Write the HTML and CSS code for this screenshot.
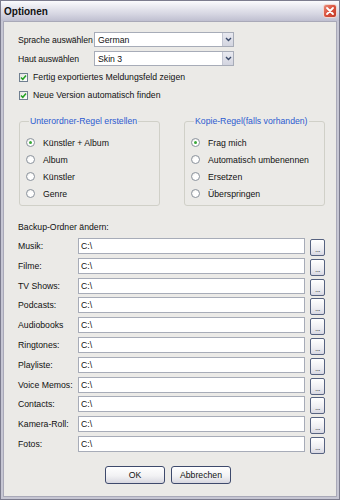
FILE: index.html
```html
<!DOCTYPE html>
<html>
<head>
<meta charset="utf-8">
<link rel="stylesheet" href="styles.css">
</head>
<body>
<div class="window">
  <div class="titlebar">
    <span class="title">Optionen</span>
    <span class="close"><svg width="14" height="14" viewBox="0 0 14 14"><path d="M4 4 L10 10 M10 4 L4 10" stroke="#fff" stroke-width="1.8" stroke-linecap="round"/></svg></span>
  </div>
  <div class="client">
    <div class="selrow">
      <span class="sellabel">Sprache auswählen</span>
      <div class="select"><span class="seltext">German</span><span class="arrow"><svg width="7" height="5" viewBox="0 0 7 5"><path d="M1 1 L3.5 3.5 L6 1" fill="none" stroke="#3a4a6a" stroke-width="1.4"/></svg></span></div>
    </div>
    <div class="selrow">
      <span class="sellabel">Haut auswählen</span>
      <div class="select"><span class="seltext">Skin 3</span><span class="arrow"><svg width="7" height="5" viewBox="0 0 7 5"><path d="M1 1 L3.5 3.5 L6 1" fill="none" stroke="#3a4a6a" stroke-width="1.4"/></svg></span></div>
    </div>
    <div class="checks">
      <label class="check"><span class="cbox"><svg width="7" height="7" viewBox="0 0 7 7"><path d="M1 3.5 L2.8 5.3 L6 1.6" fill="none" stroke="#22a122" stroke-width="1.5"/></svg></span>Fertig exportiertes Meldungsfeld zeigen</label>
      <label class="check"><span class="cbox"><svg width="7" height="7" viewBox="0 0 7 7"><path d="M1 3.5 L2.8 5.3 L6 1.6" fill="none" stroke="#22a122" stroke-width="1.5"/></svg></span>Neue Version automatisch finden</label>
    </div>
    <div class="groups">
      <fieldset class="group left">
        <legend>Unterordner-Regel erstellen</legend>
        <div class="radio"><span class="rcirc on"></span>Künstler + Album</div>
        <div class="radio"><span class="rcirc"></span>Album</div>
        <div class="radio"><span class="rcirc"></span>Künstler</div>
        <div class="radio"><span class="rcirc"></span>Genre</div>
      </fieldset>
      <fieldset class="group">
        <legend>Kopie-Regel(falls vorhanden)</legend>
        <div class="radio"><span class="rcirc on"></span>Frag mich</div>
        <div class="radio"><span class="rcirc"></span>Automatisch umbenennen</div>
        <div class="radio"><span class="rcirc"></span>Ersetzen</div>
        <div class="radio"><span class="rcirc"></span>Überspringen</div>
      </fieldset>
    </div>
    <div class="backup">Backup-Ordner ändern:</div>
    <div class="folders">
      <span class="flabel">Musik:</span><div class="finput">C:\</div><span class="browse">...</span>
      <span class="flabel">Filme:</span><div class="finput">C:\</div><span class="browse">...</span>
      <span class="flabel">TV Shows:</span><div class="finput">C:\</div><span class="browse">...</span>
      <span class="flabel">Podcasts:</span><div class="finput">C:\</div><span class="browse">...</span>
      <span class="flabel">Audiobooks</span><div class="finput">C:\</div><span class="browse">...</span>
      <span class="flabel">Ringtones:</span><div class="finput">C:\</div><span class="browse">...</span>
      <span class="flabel">Playliste:</span><div class="finput">C:\</div><span class="browse">...</span>
      <span class="flabel">Voice Memos:</span><div class="finput">C:\</div><span class="browse">...</span>
      <span class="flabel">Contacts:</span><div class="finput">C:\</div><span class="browse">...</span>
      <span class="flabel">Kamera-Roll:</span><div class="finput">C:\</div><span class="browse">...</span>
      <span class="flabel">Fotos:</span><div class="finput">C:\</div><span class="browse">...</span>
    </div>
    <div class="buttons">
      <span class="btn">OK</span>
      <span class="btn">Abbrechen</span>
    </div>
  </div>
</div>
</body>
</html>
```
FILE: styles.css
```css
* { box-sizing: border-box; }
html, body { margin: 0; padding: 0; background: #fff; }
body { font-family: "Liberation Sans", Arial, sans-serif; font-size: 8.7px; color: #111; }

.window {
  width: 340px; height: 500px;
  border: 1px solid #7c7c8e;
  background: #c6c6d3;
  display: flex; flex-direction: column;
}
.titlebar {
  height: 20px; flex: none;
  display: flex; align-items: center; justify-content: space-between;
  padding: 0 2px 0 3px;
  background: linear-gradient(to bottom, #fbfbfd 0%, #ececf2 25%, #d6d6e2 65%, #bfbfd0 100%);
}
.title { font-weight: bold; font-size: 10px; color: #111; }
.close {
  width: 14px; height: 14px;
  border: 1px solid #f2d6d0;
  border-radius: 3px;
  background: linear-gradient(135deg, #e98a78 0%, #d8503c 50%, #c23a28 100%);
  display: flex; align-items: center; justify-content: center;
}
.close svg { display: block; margin: -1px; }
.client {
  flex: 1;
  margin: 0 2px 2px 2px;
  border: 1px solid #a9a9b8;
  background: #ebeae7;
  padding: 10px 11px 0 14px;
}

.selrow { display: flex; align-items: center; height: 15px; margin-bottom: 4px; }
.sellabel { width: 76px; flex: none; white-space: nowrap; letter-spacing: -0.1px; }
.select {
  width: 140px; height: 15px; flex: none;
  background: #fff; border: 1px solid #a7acb8;
  display: flex; align-items: center; justify-content: space-between;
  padding-left: 3px;
}
.arrow {
  width: 11px; height: 13px;
  background: linear-gradient(#e8e9f0, #d3d5e0);
  border-left: 1px solid #c3c6d2;
  display: flex; align-items: center; justify-content: center;
}
.arrow svg { display: block; }

.checks { margin-top: -2px; }
.check { display: flex; align-items: center; height: 18px; padding-left: 1px; }
.cbox {
  width: 9px; height: 9px; margin-right: 5px;
  border: 1px solid #6f7f90;
  background: linear-gradient(135deg, #e4e4e0, #fff);
  display: flex; align-items: center; justify-content: center;
}
.cbox svg { display: block; }

.groups { display: flex; gap: 24px; margin-top: 12px; padding-left: 1px; }
.group {
  width: 141px; margin: 0; min-width: 0;
  border: 1px solid #d0d0c8; border-radius: 3px;
  padding: 8px 4px 3px 6px;
}
.group legend {
  color: #2c5bd0; padding: 0 1px; margin-left: 3px;
  line-height: 10px; height: 10px;
}
.radio { display: flex; align-items: center; height: 17px; white-space: nowrap; }
.rcirc {
  width: 9px; height: 9px; border-radius: 50%;
  border: 1px solid #8c949e;
  background: radial-gradient(circle at 60% 60%, #fff 40%, #e4e4e0 100%);
  margin-right: 8px; flex: none;
  display: flex; align-items: center; justify-content: center;
}
.rcirc.on::after {
  content: ""; width: 3px; height: 3px; border-radius: 50%;
  background: #3aa83a;
}

.backup { margin-top: 15px; line-height: 12px; margin-bottom: 5px; }

.folders {
  display: grid;
  grid-template-columns: 60px 227px 20px;
  column-gap: 0; row-gap: 1.8px;
  grid-auto-rows: 18px;
  align-items: start;
}
.flabel { line-height: 16px; white-space: nowrap; }
.finput {
  height: 16px; background: #fff;
  border: 1px solid #a7acb8;
  padding-left: 2px; line-height: 14px;
}
.browse {
  margin-top: 1px; margin-left: 5px; height: 17px; width: 15px;
  border: 1px solid #566280; border-radius: 2px;
  background: linear-gradient(#ffffff, #eeeef2 60%, #d8d8e2);
  font-size: 8px; line-height: 20px; text-align: center; color: #333;
  letter-spacing: -0.5px;
}

.buttons { display: flex; gap: 6px; margin-top: 12px; padding-left: 87px; }
.btn {
  width: 60px; height: 18px;
  border: 1px solid #3e4a6c; border-radius: 3px;
  background: linear-gradient(#ffffff, #f2f2f4 55%, #d8d8e0);
  display: flex; align-items: center; justify-content: center;
}
```
